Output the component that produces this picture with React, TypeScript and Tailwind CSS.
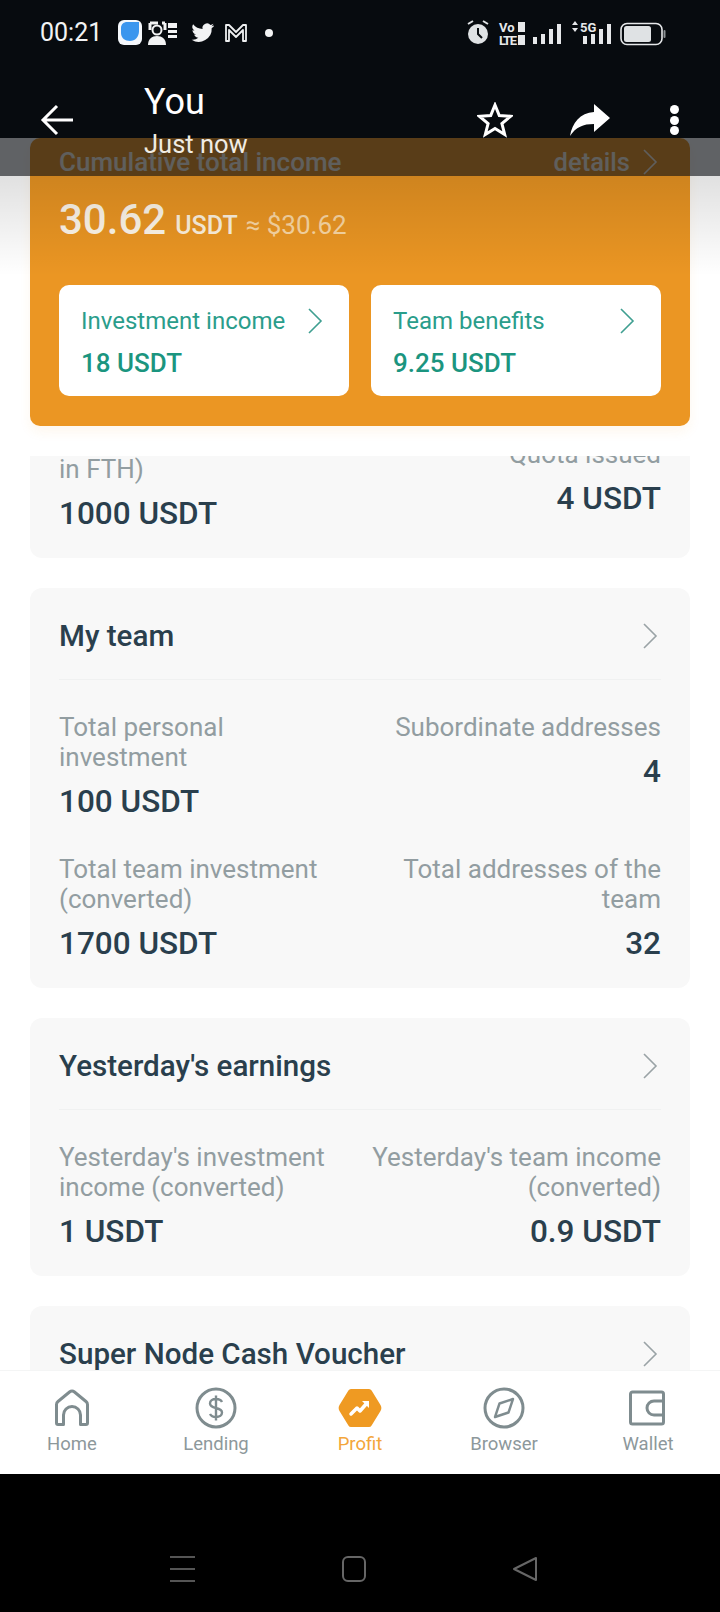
const stats = {
  team: [
    [
      { label: 'Total personal investment', value: '100 USDT' },
      { label: 'Subordinate addresses', value: '4' },
    ],
    [
      { label: 'Total team investment (converted)', value: '1700 USDT' },
      { label: 'Total addresses of the team', value: '32' },
    ],
  ],
  yesterday: [
    [
      { label: "Yesterday's investment income (converted)", value: '1 USDT' },
      { label: "Yesterday's team income (converted)", value: '0.9 USDT' },
    ],
  ],
};

function Chevron({ className, stroke = '#9aa3a6' }: { className?: string; stroke?: string }) {
  return (
    <svg className={className} width="16" height="28" viewBox="0 0 16 28" fill="none" stroke={stroke} strokeWidth="1.600">
      <path d="M2 2l12 12L2 26" />
    </svg>
  );
}

function Stat({ label, value, right }: { label: string; value: string; right?: boolean }) {
  return (
    <div className={right ? 'text-right' : ''}>
      <div className="text-[26px] leading-[30px] whitespace-pre-line text-[#929da1]">{label}</div>
      <div className="mt-[8px] text-[31.5px] leading-[44px] font-medium text-[#2a3f4d]">{value}</div>
    </div>
  );
}

function Section({ title, rows }: { title: string; rows: { label: string; value: string }[][] }) {
  return (
    <section className="shrink-0 rounded-[12px] bg-[#f8f8f8] px-[29px] pb-[22px]">
      <div className="flex h-[92px] items-center justify-between border-b border-[#f0f1f1] pr-[3px] pt-[5px]">
        <h2 className="text-[29.6px] font-medium text-[#2a3f4d]">{title}</h2>
        <Chevron />
      </div>
      <div className="flex flex-col gap-[30px] pt-[32px]">
        {rows.map((row) => (
          <div key={row[0].label} className="grid grid-cols-[1fr_1fr] gap-[20px]">
            <Stat {...row[0]} />
            <Stat {...row[1]} right />
          </div>
        ))}
      </div>
    </section>
  );
}

function IncomeBox({ title, value }: { title: string; value: string }) {
  return (
    <div className="h-[111px] rounded-[10px] bg-white pl-[22px] pr-[26px] pt-[20px]">
      <div className="flex items-center justify-between text-[24px] leading-[32px] text-[#2a9d8b]">
        <span>{title}</span>
        <Chevron className="shrink-0" stroke="#3f9f91" />
      </div>
      <div className="mt-[9px] text-[26px] leading-[34px] font-medium text-[#1b957f]">{value}</div>
    </div>
  );
}

function StatusIcons() {
  return (
    <svg width="202" height="30" viewBox="0 0 202 30" fill="none">
      {/* alarm */}
      <circle cx="14" cy="16" r="10" fill="#dfe2e4" />
      <path d="M14 10v6l4 4" stroke="#0a0e12" strokeWidth="2" />
      <path d="M4 6l5-3M24 6l-5-3" stroke="#dfe2e4" strokeWidth="2" />
      {/* volte */}
      <text x="35" y="14" fill="#e6e8ea" fontSize="13" fontWeight="700" fontFamily="Roboto, sans-serif">Vo</text>
      <text x="35" y="27" fill="#e6e8ea" fontSize="13" fontWeight="700" fontFamily="Roboto, sans-serif" textLength="18">LTE</text>
      <rect x="54" y="4" width="7" height="10" fill="#e6e8ea" />
      <rect x="54" y="17" width="7" height="10" fill="#e6e8ea" />
      {/* signal 1 */}
      <rect x="69" y="19" width="4" height="7" fill="#e6e8ea" />
      <rect x="77" y="16" width="4" height="10" fill="#e6e8ea" />
      <rect x="85" y="11" width="4" height="15" fill="#e6e8ea" />
      <rect x="93" y="6" width="4" height="20" fill="#e6e8ea" />
      {/* 5g */}
      <path d="M108 7l3-4 3 4zM108 10l3 4 3-4z" fill="#e6e8ea" />
      <text x="116" y="14" fill="#e6e8ea" fontSize="13" fontWeight="700" fontFamily="Roboto, sans-serif">5G</text>
      <rect x="119" y="18" width="4" height="8" fill="#e6e8ea" />
      <rect x="127" y="16" width="4" height="10" fill="#e6e8ea" />
      <rect x="135" y="11" width="4" height="15" fill="#e6e8ea" />
      <rect x="143" y="6" width="4" height="20" fill="#e6e8ea" />
      {/* battery */}
      <rect x="157" y="5.500" width="41" height="21" rx="6" stroke="#e6e8ea" strokeWidth="1.600" />
      <rect x="160" y="8" width="27" height="16" rx="2.500" fill="#dfe2e4" />
      <rect x="199.500" y="12" width="2" height="8" rx="1" fill="#8c9194" />
    </svg>
  );
}

function NotificationIcons() {
  return (
    <svg width="158" height="30" viewBox="0 0 158 30" fill="none">
      <rect x="0" y="2" width="24" height="25" rx="6" fill="#f4f7fb" />
      <path d="M3 10c0-4 3-6 6-6h12v9c0 6-4 10-9 10-5 0-9-3-9-8z" fill="#3b96ee" />
      {/* contacts card */}
      <path d="M32 5h8M32 5v7M47 5h-3M47 5v7" stroke="#f2f3f4" strokeWidth="3" />
      <circle cx="39" cy="12" r="4.500" fill="#0a0e12" stroke="#f2f3f4" strokeWidth="2" />
      <path d="M30 27c0-6 4-9 9-9s9 3 9 9z" fill="#f2f3f4" />
      <path d="M50 5h9v5h-9zM50 12h9v3h-9zM50 17h9v3h-9z" fill="#f2f3f4" />
      {/* twitter */}
      <path
        d="M96 7.500c-.9.4-1.700.6-2.600.8.9-.6 1.600-1.400 2-2.500-.9.500-1.800.9-2.900 1.100a4.600 4.600 0 0 0-7.900 4.200c-3.800-.2-7.200-2-9.500-4.800a4.600 4.600 0 0 0 1.400 6.200c-.7 0-1.400-.2-2-.6 0 2.300 1.600 4.200 3.700 4.600-.7.200-1.400.2-2.100.1.600 1.800 2.300 3.200 4.300 3.200a9.300 9.300 0 0 1-6.800 1.900 13 13 0 0 0 20.100-11.600c.9-.6 1.700-1.400 2.300-2.200z"
        fill="#f2f3f4"
      />
      {/* m */}
      <path d="M108 23V7h3l7 7 7-7h3v16h-3V12l-7 7-7-7v11z" stroke="#eef0f1" strokeWidth="1.800" strokeLinejoin="round" />
      <circle cx="151" cy="15" r="4" fill="#f2f3f4" />
    </svg>
  );
}

const gray = '#7f8c8f';

const tabs = [
  {
    label: 'Home',
    icon: (
      <svg width="42" height="42" viewBox="0 0 42 42" fill="none" stroke={gray} strokeWidth="3" strokeLinejoin="round">
        <path d="M5.500 36V17.500a4 4 0 0 1 1.500-3L18.500 5a4 4 0 0 1 5 0L35 14.500a4 4 0 0 1 1.500 3V36a1.500 1.500 0 0 1-1.500 1.500h-5.500V28a8.500 8.500 0 0 0-17 0v9.500H7A1.500 1.500 0 0 1 5.500 36z" />
      </svg>
    ),
  },
  {
    label: 'Lending',
    icon: (
      <svg width="42" height="42" viewBox="0 0 42 42" fill="none" stroke={gray} strokeWidth="3">
        <circle cx="21" cy="21" r="19" />
        <path d="M27 15c-1-2-3.500-3-6-3-3.500 0-6 1.800-6 4.500 0 6 12 3 12 9 0 2.700-2.500 4.500-6 4.500-2.500 0-5-1-6-3M21 8.500v25" strokeWidth="2.400" />
      </svg>
    ),
  },
  {
    label: 'Profit',
    active: true,
    icon: (
      <svg width="44" height="42" viewBox="0 0 44 42" fill="none">
        <path d="M13 2h18a3 3 0 0 1 2.600 1.500L42.500 18a6 6 0 0 1 0 6l-8.900 14.500A3 3 0 0 1 31 40H13a3 3 0 0 1-2.600-1.500L1.500 24a6 6 0 0 1 0-6l8.900-14.500A3 3 0 0 1 13 2z" fill="#ef9a22" />
        <path d="M13 27l6-6 3 3 7-8" stroke="#fff" strokeWidth="3.500" strokeLinecap="round" strokeLinejoin="round" />
        <path d="M24 14h7v7" fill="#fff" />
      </svg>
    ),
  },
  {
    label: 'Browser',
    icon: (
      <svg width="42" height="42" viewBox="0 0 42 42" fill="none" stroke={gray} strokeWidth="3">
        <circle cx="21" cy="21" r="19" />
        <path d="M30 12l-4.500 13.500L12 30l4.500-13.500z" strokeWidth="2.400" strokeLinejoin="round" />
      </svg>
    ),
  },
  {
    label: 'Wallet',
    icon: (
      <svg width="42" height="42" viewBox="0 0 42 42" fill="none" stroke={gray} strokeWidth="3" strokeLinejoin="round">
        <path d="M3.500 7a2 2 0 0 1 2-2h29a2 2 0 0 1 2 2v28a2 2 0 0 1-2 2h-29a2 2 0 0 1-2-2z" />
        <path d="M36.500 14H27a7 7 0 0 0 0 14h9.500" />
      </svg>
    ),
  },
];

export default function App() {
  return (
    <div className="relative flex h-[1612px] w-[720px] flex-col overflow-hidden bg-white [font-family:Roboto,sans-serif]">
      {/* dark app bar of the viewer */}
      <header className="relative z-20 h-[138px] shrink-0 bg-[#070b0f] text-white">
        <div className="flex h-[66px] items-center pl-[40px] pr-[54px]">
          <span className="text-[25px] text-[#f2f3f4]">00:21</span>
          <div className="ml-[16px]">
            <NotificationIcons />
          </div>
          <div className="ml-auto">
            <StatusIcons />
          </div>
        </div>
        <div className="flex h-[108px] items-center pl-[40px] pr-[41px]">
          <svg width="33" height="32" viewBox="0 0 33 32" fill="none" stroke="#fff" strokeWidth="3">
            <path d="M33 16H3M17 2L3 16l14 14" />
          </svg>
          <div className="ml-[71px] mt-[8px]">
            <div className="text-[36px] leading-[40px]">You</div>
            <div className="text-[25.500px] leading-[44px] text-[#f0ece4]">Just now</div>
          </div>
          <svg className="ml-auto" width="36" height="36" viewBox="0 0 36 36" fill="none" stroke="#fff" strokeWidth="3" strokeLinejoin="miter">
            <path d="M18 3l4.300 10.500 11.200.8-8.600 7.200 2.800 11L18 26.500 8.300 32.500l2.800-11-8.600-7.200 11.200-.8z" />
          </svg>
          <svg className="ml-[57px]" width="40" height="32" viewBox="0 0 40 32" fill="#fff">
            <path d="M24 0l16 14-16 14v-8C13 20 6 23 0 32 2 19 10 9 24 8z" />
          </svg>
          <div className="ml-[60px] flex h-[30px] w-[9px] flex-col justify-between">
            <div className="h-[9px] w-[9px] rounded-full bg-white" />
            <div className="h-[9px] w-[9px] rounded-full bg-white" />
            <div className="h-[9px] w-[9px] rounded-full bg-white" />
          </div>
        </div>
      </header>

      {/* shade lying over the page below the app bar */}
      <div className="pointer-events-none absolute left-0 right-0 top-[138px] z-10 h-[38px] bg-[#0a0e12]/65" />
      <div className="pointer-events-none absolute left-0 right-0 top-[176px] z-10 h-[100px] bg-gradient-to-b from-black/12 to-transparent" />

      <div className="shrink-0 px-[30px] pb-[30px]">
        <div className="h-[288px] rounded-[10px] bg-[#eb9623] px-[29px] shadow-[0_6px_12px_rgba(238,153,34,0.08)]">
          <div className="flex h-[42px] items-end justify-between text-white/90">
            <span className="text-[26px] font-medium leading-[36px]">Cumulative total income</span>
            <span className="flex items-center pr-[3px] text-[25.500px] font-medium leading-[36px]">
              details
              <Chevron className="ml-[12px]" stroke="rgba(255,255,255,0.9)" />
            </span>
          </div>
          <div className="mt-[12px] flex h-[56px] items-baseline whitespace-nowrap">
            <span className="text-[42px] leading-[56px] font-medium text-[#fff7ea]">30.62</span>
            <span className="ml-[9px] text-[25px] font-medium text-[#fff3df]">USDT</span>
            <span className="ml-[8px] text-[26px] text-[#fbd8a4]">≈ $30.62</span>
          </div>
          <div className="mt-[37px] grid grid-cols-2 gap-[22px]">
            <IncomeBox title="Investment income" value="18 USDT" />
            <IncomeBox title="Team benefits" value="9.25 USDT" />
          </div>
        </div>
      </div>

      {/* scrolled list, cut off by the orange card above and the tab bar below */}
      <main className="min-h-0 flex-1 overflow-hidden px-[30px]">
        <div className="-mt-[32px] flex flex-col gap-[30px]">
          <section className="shrink-0 rounded-[12px] bg-[#f8f8f8] px-[29px] pb-[22px]">
            <div className="grid grid-cols-[1fr_1fr] items-center gap-[20px]">
              <Stat label={'Total amount (converted\nin FTH)'} value="1000 USDT" />
              <Stat label="Quota issued" value="4 USDT" right />
            </div>
          </section>
          <Section title="My team" rows={stats.team} />
          <Section title="Yesterday's earnings" rows={stats.yesterday} />
          <Section title="Super Node Cash Voucher" rows={[]} />
        </div>
      </main>

      <nav className="grid h-[104px] shrink-0 grid-cols-5 border-t border-[#f4f5f5] bg-white pt-[16px]">
        {tabs.map((tab) => (
          <div key={tab.label} className="flex flex-col items-center">
            {tab.icon}
            <span className={`mt-[3px] text-[18.500px] leading-[24px] ${tab.active ? 'text-[#f3a63a]' : 'text-[#8d989b]'}`}>
              {tab.label}
            </span>
          </div>
        ))}
      </nav>

      {/* system navigation */}
      <div className="flex h-[138px] shrink-0 items-start bg-black pt-[82px]">
        <div className="ml-[170px] flex h-[26px] w-[25px] flex-col justify-between">
          <div className="h-[2px] bg-[#555]" />
          <div className="h-[2px] bg-[#555]" />
          <div className="h-[2px] bg-[#555]" />
        </div>
        <div className="ml-[147px] h-[26px] w-[24px] rounded-[6px] border-2 border-[#666]" />
        <svg className="ml-[146px]" width="26" height="26" viewBox="0 0 26 26" fill="none" stroke="#666" strokeWidth="2" strokeLinejoin="round">
          <path d="M24 2v22L2 13z" />
        </svg>
      </div>
    </div>
  );
}
